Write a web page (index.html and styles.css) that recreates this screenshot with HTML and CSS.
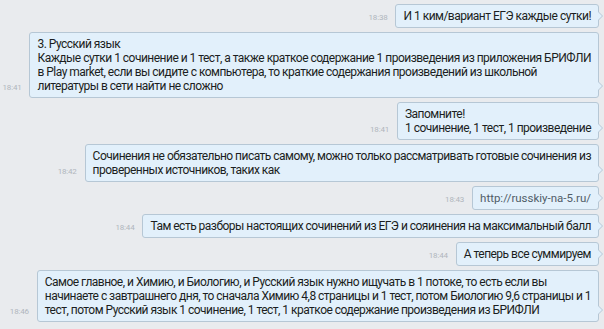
FILE: index.html
```html
<!DOCTYPE html>
<html lang="ru">
<head>
<meta charset="utf-8">
<link rel="stylesheet" href="styles.css">
</head>
<body>
<div class="chat">
  <div class="row"><span class="time">18:38</span><div class="bubble">И 1 ким/вариант ЕГЭ каждые сутки!</div></div>
  <div class="row"><span class="time">18:41</span><div class="bubble">3. Русский язык<br>Каждые сутки 1 сочинение и 1 тест, а также краткое содержание 1 произведения из приложения БРИФЛИ<br>в Play market, если вы сидите с компьютера, то краткие содержания произведений из школьной<br>литературы в сети найти не сложно</div></div>
  <div class="row"><span class="time">18:41</span><div class="bubble">Запомните!<br>1 сочинение, 1 тест, 1 произведение</div></div>
  <div class="row"><span class="time">18:42</span><div class="bubble">Сочинения не обязательно писать самому, можно только рассматривать готовые сочинения из<br>проверенных источников, таких как</div></div>
  <div class="row"><span class="time">18:43</span><div class="bubble link">http://russkiy-na-5.ru/</div></div>
  <div class="row"><span class="time">18:44</span><div class="bubble">Там есть разборы настоящих сочинений из ЕГЭ и сояинения на максимальный балл</div></div>
  <div class="row"><span class="time">18:44</span><div class="bubble">А теперь все суммируем</div></div>
  <div class="row"><span class="time">18:46</span><div class="bubble">Самое главное, и Химию, и Биологию, и Русский язык нужно ищучать в 1 потоке, то есть если вы<br>начинаете с завтрашнего дня, то сначала Химию 4,8 страницы и 1 тест, потом Биологию 9,6 страницы и 1<br>тест, потом Русский язык 1 сочинение, 1 тест, 1 краткое содержание произведения из БРИФЛИ</div></div>
</div>
</body>
</html>
```
FILE: styles.css
```css
html, body {
  margin: 0;
  padding: 0;
}
body {
  background: #e9ebee;
  font-family: Roboto, "Noto Sans", sans-serif;
  width: 604px;
  height: 329px;
  overflow: hidden;
}
.chat {
  display: flex;
  flex-direction: column;
  align-items: flex-end;
  gap: 4px;
  padding: 4px 5px 0 0;
}
.row {
  display: flex;
  align-items: last baseline;
  gap: 8px;
}
.time {
  font-size: 8px;
  color: #b0b6bd;
  letter-spacing: -0.2px;
}
.bubble {
  position: relative;
  background: #e2f0fb;
  border: 1px solid #b6c7d5;
  border-radius: 3px;
  padding: 4px 7px 4px 7px;
  font-size: 12px;
  letter-spacing: -0.52px;
  line-height: 14px;
  color: #1b1e21;
  white-space: nowrap;
}
.link {
  color: #505c68;
  font-size: 11.5px;
  letter-spacing: 0;
}
.bubble::before,
.bubble::after {
  content: "";
  position: absolute;
  width: 0;
  height: 0;
  border-style: solid;
}
.bubble::before {
  right: -5px;
  bottom: 6px;
  border-width: 5px 0 5px 5px;
  border-color: transparent transparent transparent #b6c7d5;
}
.bubble::after {
  right: -4px;
  bottom: 7px;
  border-width: 4px 0 4px 4px;
  border-color: transparent transparent transparent #e2f0fb;
}
```
